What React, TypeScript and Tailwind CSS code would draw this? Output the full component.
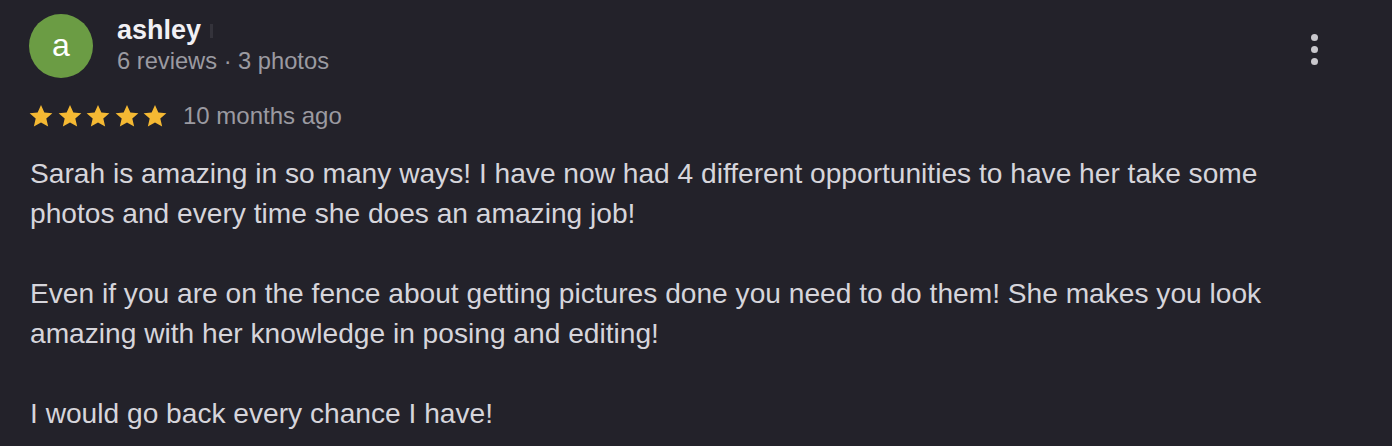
import React from 'react';

function Star() {
  return (
    <svg viewBox="0 0 24 24" className="w-[26px] h-[26px]">
      <path
        d="M12 1.8l3.1 6.9 7.4.7-5.6 5 1.7 7.4L12 17.9l-6.6 3.9 1.7-7.4-5.6-5 7.4-.7z"
        fill="#f5b933"
      />
    </svg>
  );
}

export default function App() {
  const paragraphs = [
    'Sarah is amazing in so many ways! I have now had 4 different opportunities to have her take some photos and every time she does an amazing job!',
    'Even if you are on the fence about getting pictures done you need to do them! She makes you look amazing with her knowledge in posing and editing!',
    'I would go back every chance I have!',
  ];

  return (
    <div className="w-[1392px] h-[446px] overflow-hidden bg-[#23222a] font-['Liberation_Sans',Arial,sans-serif]">
      <div className="flex items-start pl-[29px] pr-[70px] pt-[14px]">
        <div className="w-[64px] h-[64px] rounded-full bg-[#6b9c44] flex items-center justify-center shrink-0">
          <span className="text-white text-[32px] leading-none -mt-[3px]">a</span>
        </div>
        <div className="ml-[24px] flex-1 pt-[1px]">
          <div className="flex items-center">
            <span className="text-[#f1f0f4] text-[27px] font-bold leading-[31px]">ashley</span>
            <span className="ml-[9px] w-[3px] h-[14px] bg-[#34333b]" />
          </div>
          <div className="text-[#9b9aa1] text-[23.7px] leading-[30px]">6 reviews · 3 photos</div>
        </div>
        <button className="mt-[16px] flex flex-col gap-[5px] items-center p-1" aria-label="More">
          <span className="w-[7px] h-[7px] rounded-full bg-[#c9c8cd]" />
          <span className="w-[7px] h-[7px] rounded-full bg-[#c9c8cd]" />
          <span className="w-[7px] h-[7px] rounded-full bg-[#c9c8cd]" />
        </button>
      </div>

      <div className="flex items-center pl-[28px] mt-[23px]">
        <div className="flex gap-[2.5px]">
          <Star />
          <Star />
          <Star />
          <Star />
          <Star />
        </div>
        <span className="ml-[15px] text-[#9b9aa1] text-[24px] leading-[30px]">10 months ago</span>
      </div>

      <div className="pl-[30px] w-[1300px] mt-[23px] text-[#d6d5db] text-[28.15px] leading-[40px]">
        {paragraphs.map((p, i) => (
          <p key={i} className={i > 0 ? 'mt-[40px]' : ''}>
            {p}
          </p>
        ))}
      </div>
    </div>
  );
}
